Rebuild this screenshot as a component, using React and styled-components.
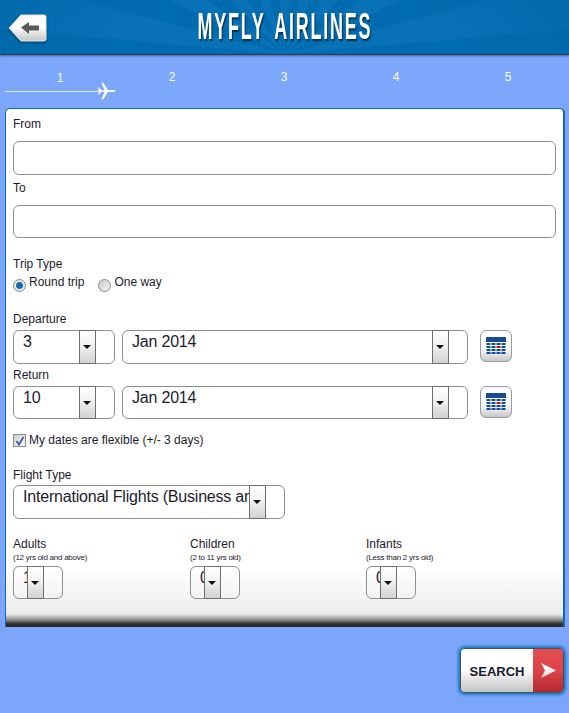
import React from 'react';
import styled, {createGlobalStyle} from 'styled-components';

const GlobalStyle = createGlobalStyle`
  html, body {
    margin: 0;
    padding: 0;
    background: #7ba6fa;
  }
  * {
    box-sizing: border-box;
  }
`;

function BackIcon() {
  return (
    <svg width="39" height="28" viewBox="0 0 39 28">
      <defs>
        <linearGradient id="backFill" x1="0" y1="0" x2="0" y2="1">
          <stop offset="0.45" stopColor="#ffffff" />
          <stop offset="1" stopColor="#c4c4c4" />
        </linearGradient>
      </defs>
      <path
        d="M13 1H36a2 2 0 0 1 2 2V25a2 2 0 0 1-2 2H13L1 14Z"
        fill="url(#backFill)"
        stroke="#e8e8e8"
        strokeLinejoin="round"
      />
      <path d="M13 13.5L21 8V11.5H31V16.5H21V20Z" fill="#5a5a5a" />
    </svg>
  );
}

function PlaneIcon() {
  return (
    <svg width="19" height="18" viewBox="0 0 19 18">
      <path
        d="M0 8.5L2 8.4L1 5.4H2L4.4 8.3L7.6 8.2L4.2 0.5H6L11 8.1H16C17.6 8.1 18.6 8.6 19 9C18.6 9.4 17.6 9.9 16 9.9H11L6 17.5H4.2L7.6 9.8L4.4 9.7L2 12.6H1L2 9.6L0 9.5Z"
        fill="#fff"
      />
    </svg>
  );
}

function CalendarIcon() {
  const cells = [];
  for (let row = 0; row < 4; row++) {
    for (let col = 0; col < 4; col++) {
      const isToday = row === 1 && col === 2;
      cells.push(
        <rect
          key={`${row}-${col}`}
          x={0.5 + col * 5}
          y={6 + row * 3}
          width="4"
          height="2"
          fill={isToday ? '#c01818' : '#0c4da2'}
        />,
      );
    }
  }
  return (
    <svg width="20" height="18" viewBox="0 0 20 18">
      <rect x="0" y="0" width="20" height="5" fill="#1b4a94" />
      {cells}
    </svg>
  );
}

function ArrowRightIcon() {
  return (
    <svg width="15" height="15" viewBox="0 0 15 15">
      <defs>
        <linearGradient id="searchArrow" x1="0" y1="0" x2="0" y2="1">
          <stop offset="0.3" stopColor="#ffffff" />
          <stop offset="1" stopColor="#e8d2d2" />
        </linearGradient>
      </defs>
      <path d="M0 0L15 7.5L0 15L4 7.5Z" fill="url(#searchArrow)" />
    </svg>
  );
}

function Select({value, width, height = 34}) {
  return (
    <SelectBox $width={width} $height={height}>
      <SelectValue>{value}</SelectValue>
      <SelectArrow />
    </SelectBox>
  );
}

function CalendarButton() {
  return (
    <CalButton>
      <CalendarIcon />
    </CalButton>
  );
}

function Passenger({label, hint, width}) {
  return (
    <PassengerCol $width={width}>
      <Label>{label}</Label>
      <Hint>{hint}</Hint>
      <Select value={label === 'Adults' ? '1' : '0'} width="50px" height={33} />
    </PassengerCol>
  );
}

export default function App() {
  return (
    <Page>
      <GlobalStyle />
      <Header>
        <BackButton>
          <BackIcon />
        </BackButton>
        <Title>MYFLY AIRLINES</Title>
      </Header>

      <Steps>
        {[1, 2, 3, 4, 5].map((step) => (
          <Step key={step} $active={step === 1}>
            {step}
          </Step>
        ))}
        <Progress>
          <ProgressLine />
          <PlaneIcon />
        </Progress>
      </Steps>

      <Card>
        <Label>From</Label>
        <TextInput />
        <Label $gap="6px">To</Label>
        <TextInput $short />

        <Label $gap="19px">Trip Type</Label>
        <RadioRow>
          <RadioLabel>
            <Radio $checked />
            Round trip
          </RadioLabel>
          <RadioLabel>
            <Radio />
            One way
          </RadioLabel>
        </RadioRow>

        <Label $gap="20px">Departure</Label>
        <DateRow>
          <Select value="3" width="102px" />
          <Select value="Jan 2014" width="346px" />
          <CalendarButton />
        </DateRow>
        <Label $gap="4px">Return</Label>
        <DateRow>
          <Select value="10" width="102px" height={33} />
          <Select value="Jan 2014" width="346px" height={33} />
          <CalendarButton />
        </DateRow>

        <FlexibleRow>
          <Checkbox>
            <svg width="10" height="10" viewBox="0 0 10 10">
              <path d="M1.5 5L4 8.5L8.5 1" fill="none" stroke="#3d5fa8" strokeWidth="1.8" />
            </svg>
          </Checkbox>
          My dates are flexible (+/- 3 days)
        </FlexibleRow>

        <Label $gap="20px">Flight Type</Label>
        <FlightSelect>
          <Select value="International Flights (Business and Economy)" width="272px" />
        </FlightSelect>

        <PassengerRow>
          <Passenger label="Adults" hint="(12 yrs old and above)" width="177px" />
          <Passenger label="Children" hint="(2 to 11 yrs old)" width="176px" />
          <Passenger label="Infants" hint="(Less than 2 yrs old)" width="150px" />
        </PassengerRow>
      </Card>

      <Footer>
        <SearchButton>
          <SearchText>SEARCH</SearchText>
          <SearchArrow>
            <ArrowRightIcon />
          </SearchArrow>
        </SearchButton>
      </Footer>
    </Page>
  );
}

const Page = styled.div`
  width: 569px;
  height: 713px;
  overflow: hidden;
  display: flex;
  flex-direction: column;
  background: #7ba6fa;
  font-family: "Liberation Sans", Arial, sans-serif;
  color: #1c1c2c;
`;

const Header = styled.header`
  position: relative;
  flex: none;
  height: 55px;
  display: flex;
  align-items: center;
  justify-content: center;
  background:
    radial-gradient(ellipse 340px 120px at 50% 100%, rgba(0, 105, 171, 0) 50%, #0068aa 100%),
    repeating-conic-gradient(from -5deg at 50% 100%, #0972b7 0deg 10deg, #006bae 10deg 20deg);
  border-bottom: 1px solid #2a3a55;
  box-shadow: 0 1px 2px rgba(30, 50, 90, 0.55);
`;

const BackButton = styled.div`
  position: absolute;
  left: 8px;
  top: 14px;
  display: flex;
  filter: drop-shadow(0 1px 1px rgba(0, 30, 60, 0.6));
`;

const Title = styled.h1`
  margin: 0;
  font-size: 36px;
  line-height: 40px;
  font-weight: 700;
  letter-spacing: 3.5px;
  word-spacing: 6px;
  white-space: nowrap;
  color: #fff;
  transform: scaleX(0.5);
  text-shadow: 2px 2px 2px #04304f;
`;

const Steps = styled.div`
  position: relative;
  flex: none;
  height: 53px;
  padding: 15px 4px 0;
  display: grid;
  grid-template-columns: repeat(5, 112px);
`;

const Step = styled.div`
  text-align: center;
  font-size: 12px;
  line-height: 14px;
  color: #fff;
  padding-top: ${(p) => (p.$active ? '1px' : '0')};
`;

const Progress = styled.div`
  position: absolute;
  left: 5px;
  top: 27px;
  display: flex;
  align-items: center;
`;

const ProgressLine = styled.div`
  width: 92px;
  height: 1px;
  background: #dfe9fd;
`;

const Card = styled.main`
  flex: none;
  width: 560px;
  height: 519px;
  margin-left: 5px;
  padding: 8px 7px 0;
  overflow: hidden;
  border: 1px solid #0a6db3;
  border-right: 2px solid #1c62a6;
  border-bottom: none;
  border-radius: 5px 5px 0 0;
  background: linear-gradient(
    to bottom,
    #fff 0,
    #fff 458px,
    #ececec 505px,
    #8a8a8a 511px,
    #2c2c2c 515px,
    #2c2c2c 519px
  );
`;

const Label = styled.div`
  font-size: 12px;
  line-height: 14px;
  margin-top: ${(p) => p.$gap || '0'};
`;

const TextInput = styled.div`
  height: ${(p) => (p.$short ? '33px' : '34px')};
  margin-top: 10px;
  width: 543px;
  border: 1px solid #8f8f8f;
  border-radius: 6px;
  background: #fff;
`;

const RadioRow = styled.div`
  display: flex;
  gap: 14px;
  margin-top: 4px;
`;

const RadioLabel = styled.div`
  display: flex;
  align-items: flex-start;
  gap: 3px;
  font-size: 12px;
  line-height: 15px;
`;

const Radio = styled.span`
  width: 13px;
  height: 13px;
  margin-top: 4px;
  border-radius: 50%;
  border: 1px solid #8a8a8a;
  background: ${(p) =>
    p.$checked
      ? 'radial-gradient(circle, #0f6fb0 0 3px, #e8e8e8 4px)'
      : 'linear-gradient(135deg, #c9c9c9, #f4f4f4)'};
`;

const DateRow = styled.div`
  display: flex;
  align-items: flex-start;
  gap: 7px;
  margin-top: 4px;
`;

const SelectBox = styled.div`
  flex: none;
  width: ${(p) => p.$width};
  height: ${(p) => p.$height}px;
  display: flex;
  align-items: stretch;
  padding-right: 18px;
  border: 1px solid #8f8f8f;
  border-radius: 6px;
  background: transparent;
`;

const SelectValue = styled.div`
  flex: 1;
  min-width: 0;
  overflow: hidden;
  white-space: nowrap;
  padding-left: 9px;
  font-size: 16px;
  line-height: 22px;
  letter-spacing: -0.2px;
`;

const SelectArrow = styled.div`
  position: relative;
  flex: none;
  width: 17px;
  margin: -1px 0;
  border: 1px solid #6e6e6e;
  background: linear-gradient(to bottom, #fff 0, #f4f4f4 40%, #d2d2d2 100%);

  &::after {
    content: '';
    position: absolute;
    left: 3px;
    top: 14px;
    border-left: 4px solid transparent;
    border-right: 4px solid transparent;
    border-top: 4px solid #111;
  }
`;

const CalButton = styled.div`
  flex: none;
  width: 32px;
  height: 32px;
  margin-left: 5px;
  display: flex;
  align-items: center;
  justify-content: center;
  border: 1px solid #9a9a9a;
  border-radius: 6px;
  background: linear-gradient(to bottom, #fff 0, #fff 55%, #c8c8c8 100%);
`;

const FlexibleRow = styled.div`
  display: flex;
  align-items: center;
  gap: 3px;
  margin-top: 14px;
  font-size: 12px;
  line-height: 15px;
`;

const Checkbox = styled.span`
  width: 13px;
  height: 13px;
  display: flex;
  align-items: center;
  justify-content: center;
  border: 1px solid #8a8a8a;
  background: linear-gradient(135deg, #d0d0d0, #f6f6f6);
`;

const FlightSelect = styled.div`
  margin-top: 3px;
`;

const PassengerRow = styled.div`
  display: flex;
  margin-top: 18px;
`;

const PassengerCol = styled.div`
  width: ${(p) => p.$width};

  ${SelectBox} {
    margin-top: 3px;
  }
`;

const Hint = styled.div`
  font-size: 8px;
  line-height: 11px;
  margin-top: 1px;
  letter-spacing: -0.25px;
`;

const Footer = styled.footer`
  flex: 1;
  display: flex;
  justify-content: flex-end;
  padding: 21px 5px 0 0;
`;

const SearchButton = styled.div`
  width: 104px;
  height: 45px;
  display: flex;
  overflow: hidden;
  border: 1px solid #44515f;
  border-radius: 5px;
  box-shadow: 0 0 3px 2px #1877bd;
`;

const SearchText = styled.div`
  flex: 1;
  display: flex;
  align-items: center;
  justify-content: center;
  padding-top: 2px;
  font-size: 13px;
  font-weight: 700;
  color: #17202c;
  background: linear-gradient(to bottom, #fff 0, #fff 45%, #c2c2c2 100%);
`;

const SearchArrow = styled.div`
  flex: none;
  width: 30px;
  display: flex;
  align-items: center;
  justify-content: center;
  background: linear-gradient(to bottom, #e34d52 0, #dc4349 50%, #b22a2f 100%);
`;
